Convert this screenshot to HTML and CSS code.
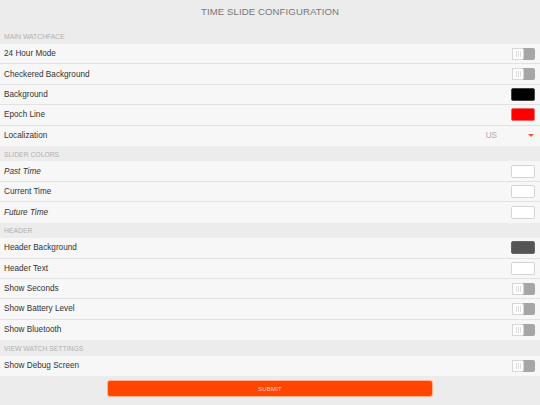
FILE: index.html
```html
<!DOCTYPE html>
<html>
<head>
<meta charset="utf-8">
<link rel="stylesheet" href="styles.css">
</head>
<body>
<div class="page">
  <header class="title">TIME SLIDE CONFIGURATION</header>

  <div class="section first">MAIN WATCHFACE</div>
  <div class="row"><span class="label">24 Hour Mode</span><span class="toggle"><span class="knob"></span></span></div>
  <div class="row"><span class="label">Checkered Background</span><span class="toggle"><span class="knob"></span></span></div>
  <div class="row"><span class="label">Background</span><span class="swatch black"></span></div>
  <div class="row"><span class="label">Epoch Line</span><span class="swatch red"></span></div>
  <div class="row last"><span class="label">Localization</span><span class="select"><span class="value">US</span><span class="caret"></span></span></div>

  <div class="section">SLIDER COLORS</div>
  <div class="row"><span class="label italic">Past Time</span><span class="swatch white"></span></div>
  <div class="row"><span class="label">Current Time</span><span class="swatch white"></span></div>
  <div class="row last"><span class="label italic">Future Time</span><span class="swatch white"></span></div>

  <div class="section">HEADER</div>
  <div class="row"><span class="label">Header Background</span><span class="swatch dark"></span></div>
  <div class="row"><span class="label">Header Text</span><span class="swatch white"></span></div>
  <div class="row"><span class="label">Show Seconds</span><span class="toggle"><span class="knob"></span></span></div>
  <div class="row"><span class="label">Show Battery Level</span><span class="toggle"><span class="knob"></span></span></div>
  <div class="row last"><span class="label">Show Bluetooth</span><span class="toggle"><span class="knob"></span></span></div>

  <div class="section">VIEW WATCH SETTINGS</div>
  <div class="row last"><span class="label">Show Debug Screen</span><span class="toggle"><span class="knob"></span></span></div>

  <div class="actions"><button class="submit">SUBMIT</button></div>
</div>
</body>
</html>
```

FILE: styles.css
```css
html, body {
  margin: 0;
  padding: 0;
  background: #ececec;
  font-family: "Liberation Sans", Arial, sans-serif;
}
.page {
  width: 540px;
  height: 405px;
  background: #ececec;
  display: flex;
  flex-direction: column;
}
.title {
  height: 24px;
  line-height: 24px;
  text-align: center;
  font-size: 9.6px;
  color: #777;
  letter-spacing: 0.1px;
}
.section {
  height: 15.5px;
  padding-left: 4px;
  font-size: 6.8px;
  color: #b0b0b0;
  display: flex;
  align-items: center;
  box-sizing: border-box;
  padding-top: 1px;
}
.section.first {
  height: 20px;
  padding-top: 5px;
}
.row {
  height: 20.4px;
  box-sizing: border-box;
  background: #f7f7f7;
  border-bottom: 1px solid #e2e2e2;
  display: flex;
  align-items: center;
  justify-content: space-between;
  padding: 0 5px 0 4px;
}
.row.last {
  border-bottom: none;
}
.label {
  font-size: 8.2px;
  color: #333;
}
.label.italic {
  font-style: italic;
}
.toggle {
  width: 23px;
  height: 12px;
  box-sizing: border-box;
  background: #a6a6a6;
  border-radius: 2px;
  display: flex;
}
.knob {
  width: 12px;
  height: 12px;
  box-sizing: border-box;
  background: #fff;
  border: 1px solid #d6d6d6;
  border-radius: 2px;
  background-image: linear-gradient(90deg, transparent 3.5px, #ddd 3.5px, #ddd 4.5px, transparent 4.5px, transparent 5.5px, #ddd 5.5px, #ddd 6.5px, transparent 6.5px, transparent 7.5px, #ddd 7.5px, #ddd 8.5px, transparent 8.5px);
  background-size: 100% 6px;
  background-position: 0 2px;
  background-repeat: no-repeat;
}
.swatch {
  width: 24px;
  height: 13px;
  box-sizing: border-box;
  border-radius: 2px;
  border: 1px solid #d4d4d4;
}
.swatch.black { background: #000; border-color: #444; }
.swatch.red { background: #ff0000; border-color: #e66; }
.swatch.white { background: #fff; }
.swatch.dark { background: #555; border-color: #666; }
.select {
  display: flex;
  align-items: center;
}
.value {
  font-size: 8.2px;
  color: #aaa;
  margin-right: 31px;
}
.caret {
  width: 0;
  height: 0;
  border-left: 3px solid transparent;
  border-right: 3px solid transparent;
  border-top: 3.5px solid #f05a28;
  margin-right: 1px;
}
.actions {
  display: flex;
  justify-content: center;
  padding-top: 5.5px;
}
.submit {
  width: 324px;
  height: 14.5px;
  margin: 0;
  padding: 0;
  border: none;
  border-radius: 2px;
  background: #ff4500;
  color: #ffd9c8;
  font-family: "Liberation Sans", Arial, sans-serif;
  font-size: 6px;
  letter-spacing: 0.2px;
  box-shadow: 0 0 0 1px #ffb38f;
}
```
